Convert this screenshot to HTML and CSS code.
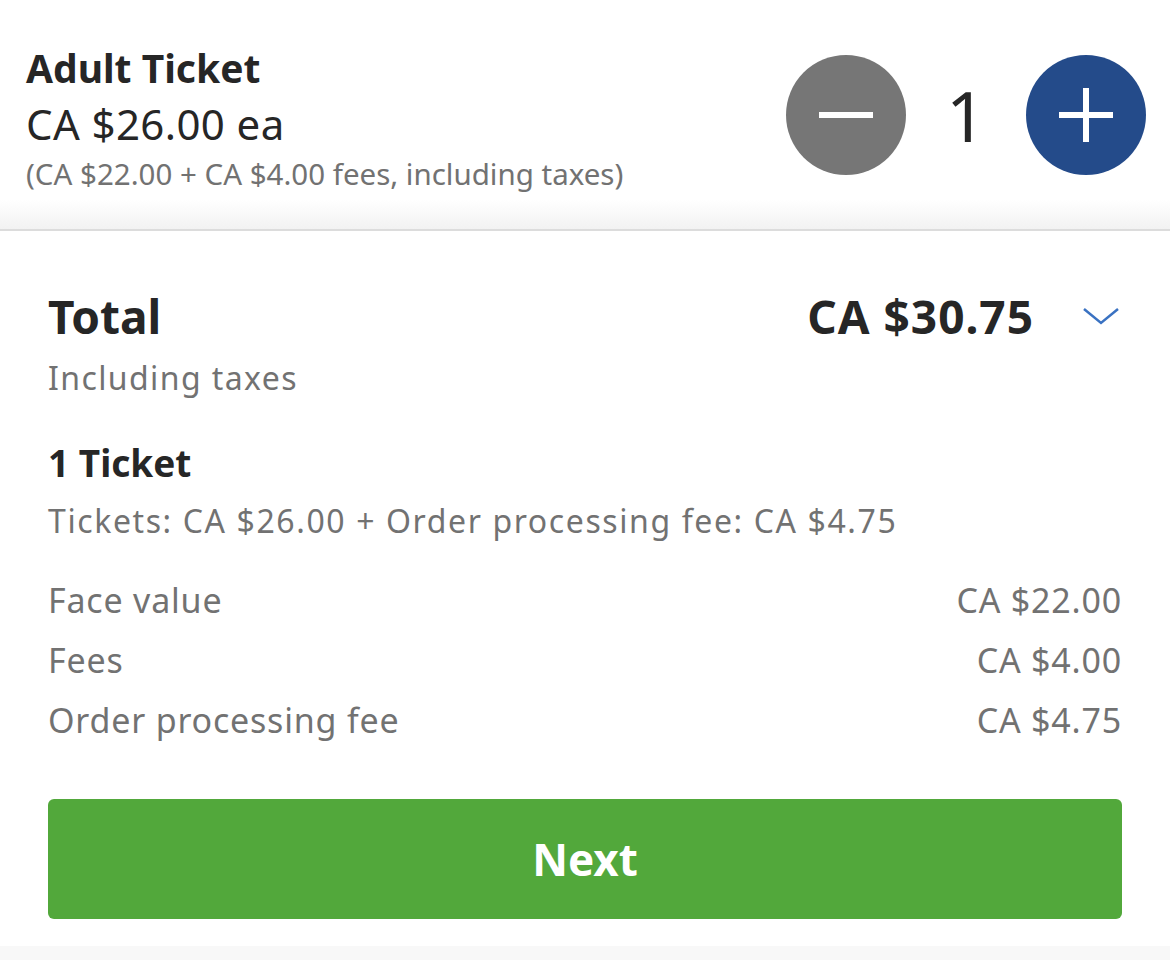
FILE: index.html
```html
<!DOCTYPE html>
<html>
<head>
<meta charset="utf-8">
<link rel="stylesheet" href="styles.css">
</head>
<body>
<div class="page">
  <section class="ticket">
    <div class="ticket-info">
      <div class="ticket-name">Adult Ticket</div>
      <div class="ticket-price">CA $26.00 ea</div>
      <div class="ticket-fees">(CA $22.00 + CA $4.00 fees, including taxes)</div>
    </div>
    <div class="stepper">
      <button class="step step-minus" aria-label="Decrease">
        <svg width="60" height="60" viewBox="0 0 60 60"><rect x="3" y="27" width="54" height="6" fill="#fff"/></svg>
      </button>
      <span class="qty">1</span>
      <button class="step step-plus" aria-label="Increase">
        <svg width="60" height="60" viewBox="0 0 60 60"><rect x="3" y="27" width="54" height="6" fill="#fff"/><rect x="27" y="3" width="6" height="54" fill="#fff"/></svg>
      </button>
    </div>
  </section>
  <div class="shade"></div>
  <section class="summary">
    <div class="total-row">
      <div class="total-label">Total</div>
      <div class="total-right">
        <span class="total-amount">CA $30.75</span>
        <svg class="chev" width="38" height="18" viewBox="0 0 38 18"><polyline points="2,2 19,16 36,2" fill="none" stroke="#3a72c2" stroke-width="2.5"/></svg>
      </div>
    </div>
    <div class="sub incl">Including taxes</div>
    <div class="count">1 Ticket</div>
    <div class="sub breakdown">Tickets: CA $26.00 + Order processing fee: CA $4.75</div>
    <div class="lines">
      <div class="line"><span>Face value</span><span>CA $22.00</span></div>
      <div class="line"><span>Fees</span><span>CA $4.00</span></div>
      <div class="line"><span>Order processing fee</span><span>CA $4.75</span></div>
    </div>
    <button class="next">Next</button>
  </section>
  <div class="footer"></div>
</div>
</body>
</html>
```
FILE: styles.css
```css
* { box-sizing: border-box; }
html, body { margin: 0; padding: 0; background: #fff; }
body { font-family: "Noto Sans", Lato, sans-serif; color: #262626; width: 1170px; height: 960px; overflow: hidden; }
.page { display: flex; flex-direction: column; height: 960px; }
.ticket { display: flex; justify-content: space-between; align-items: flex-start; padding: 40px 24px 0 26px; height: 200px; }
.ticket-info { display: flex; flex-direction: column; }
.ticket-name { font-size: 39px; font-weight: 700; line-height: 56px; }
.ticket-price { font-size: 42px; line-height: 56px; letter-spacing: 0.4px; }
.ticket-fees { font-size: 29.5px; color: #727272; line-height: 44px; }
.stepper { display: flex; align-items: center; margin-top: 15px; }
.step { width: 120px; height: 120px; border-radius: 50%; border: none; padding: 0; display: flex; align-items: center; justify-content: center; }
.step-minus { background: #767676; }
.step-plus { background: #244b8a; }
.qty { font-size: 70px; width: 120px; text-align: center; line-height: 1; }
.shade { height: 31px; background: linear-gradient(#fff, #f2f2f2); border-bottom: 2px solid #dcdcdc; }
.summary { padding: 55px 48px 0 48px; display: flex; flex-direction: column; flex: 1; }
.total-row { display: flex; justify-content: space-between; align-items: center; height: 60px; }
.total-label { font-size: 46px; font-weight: 700; line-height: 60px; }
.total-right { display: flex; align-items: center; gap: 48px; }
.total-amount { font-size: 46px; font-weight: 700; line-height: 60px; letter-spacing: 1px; }
.chev { margin-right: 2px; margin-top: 0; }
.sub { font-size: 32px; color: #727272; line-height: 60px; letter-spacing: 1.6px; }
.incl { margin-top: 2px; letter-spacing: 1.4px; }
.count { font-size: 37px; font-weight: 700; line-height: 60px; margin-top: 25px; }
.breakdown { margin-top: -2px; }
.lines { margin-top: 19px; display: flex; flex-direction: column; }
.line { display: flex; justify-content: space-between; font-size: 34px; color: #727272; line-height: 60px; letter-spacing: 0.8px; }
.next { margin-top: 49px; height: 120px; width: 1074px; flex: none; border: none; border-radius: 6px; background: #52a83b; color: #fff; font-family: inherit; font-size: 44px; font-weight: 700; }
.footer { height: 14px; background: #f8f8f8; flex: none; }
```
